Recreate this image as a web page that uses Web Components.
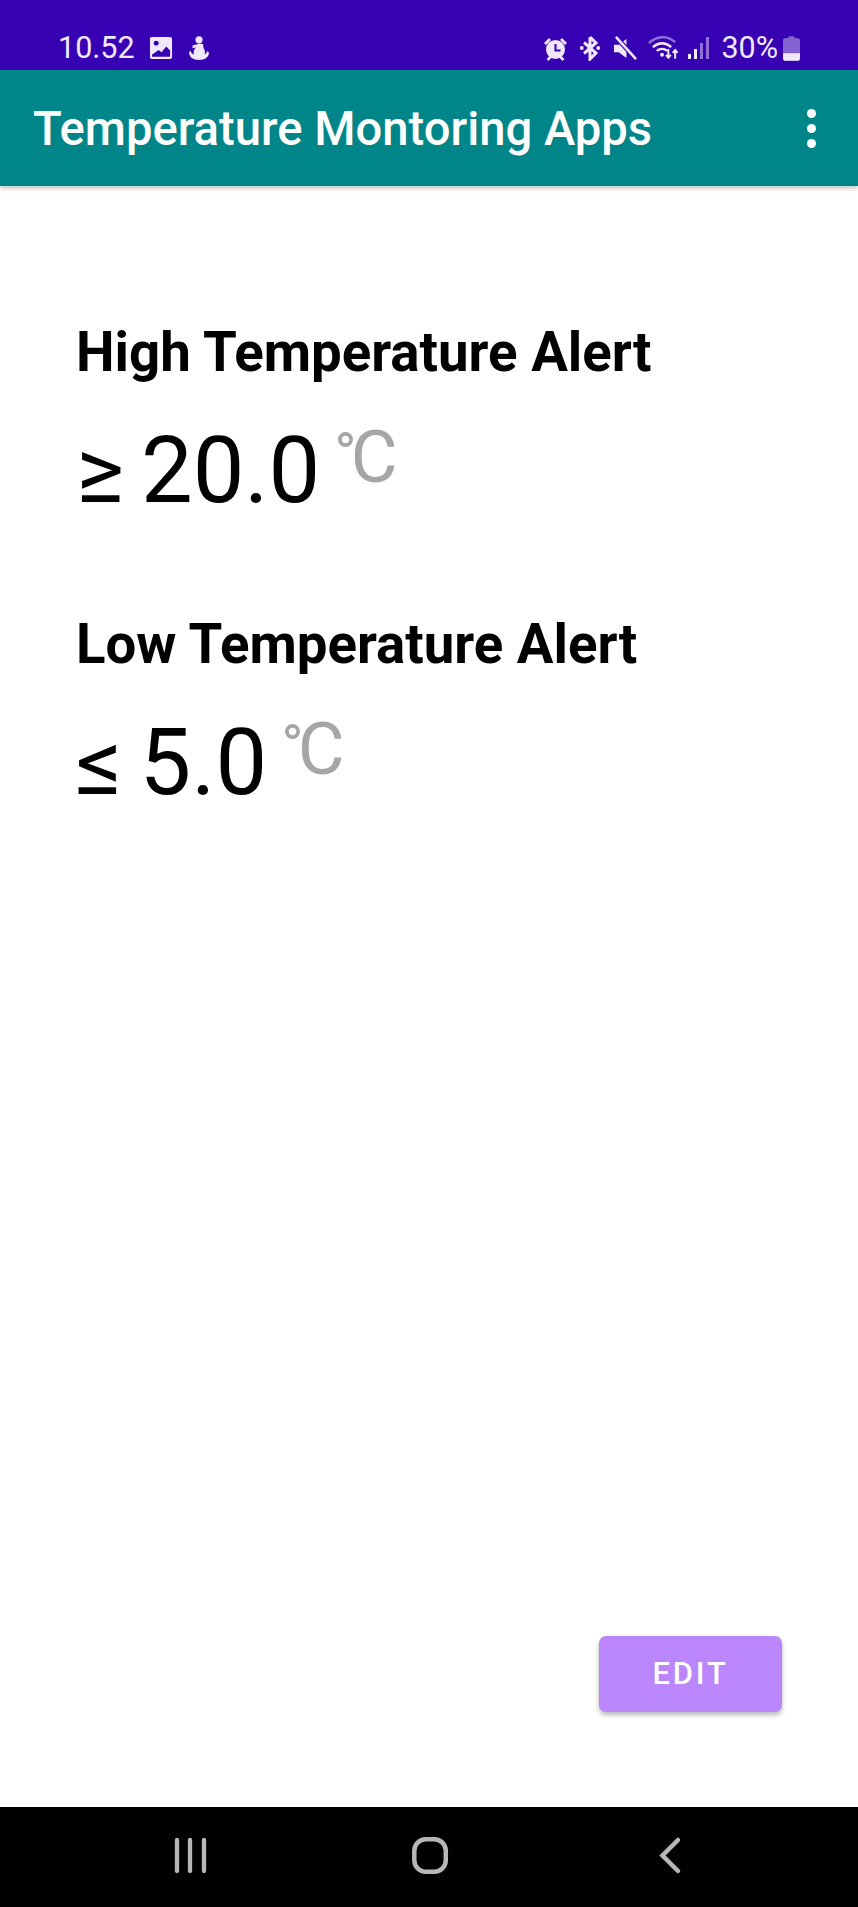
<!DOCTYPE html>
<html><head><meta charset="utf-8">
<style>html,body{margin:0;padding:0;background:#fff}body{font-family:Roboto,sans-serif}</style>
</head><body>
<app-screen>
  <status-bar></status-bar>
  <app-bar>Temperature Montoring Apps</app-bar>
  <main-content>
    <temp-alert title-text="High Temperature Alert" value="≥ 20.0"></temp-alert>
    <temp-alert title-text="Low Temperature Alert" value="≤ 5.0"></temp-alert>
  </main-content>
  <edit-button>EDIT</edit-button>
  <nav-bar></nav-bar>
</app-screen>
<script>
function def(name,html){customElements.define(name,class extends HTMLElement{connectedCallback(){if(this.shadowRoot)return;const r=this.attachShadow({mode:'open'});r.innerHTML=typeof html==='function'?html(this):html;}});}
def('app-screen',`<style>:host{display:flex;flex-direction:column;width:858px;height:1907px;overflow:hidden;background:#fff}</style><slot></slot>`);
def('status-bar',`<style>
:host{display:flex;box-sizing:border-box;height:70px;flex:none;background:#3700b3;color:#f1e9fb;font:400 30.500px/1 Roboto,sans-serif;padding:33px 0 0 58px;align-items:flex-start;justify-content:space-between}
.g{display:flex;align-items:center;height:30px}
svg{display:block;flex:none}
.r{margin-right:58px}
</style>
<div class="g"><span>10.52</span>
<svg style="margin-left:14px" width="24" height="24" viewBox="0 0 25 25"><path fill="#f1e9fb" fill-rule="evenodd" d="M3 1h19a2 2 0 0 1 2 2v19a2 2 0 0 1-2 2H3a2 2 0 0 1-2-2V3a2 2 0 0 1 2-2zM3 21.500h19V15l-4-4-5 6-3-2.500-7 5z"/><circle cx="7.500" cy="7.500" r="2.600" fill="#3700b3"/></svg>
<svg style="margin-left:15px" width="21" height="24" viewBox="0 0 21 24"><circle cx="11" cy="3.800" r="3.600" fill="#f1e9fb"/><path fill="#f1e9fb" d="M4.500 9.500L11 7.800 15 8l.5 4c1.500 2 2 4 1 6 1.500 0 2.500-1 2.500-3l2 1.500c0 4.500-4 7.500-10 7.500S1 21 1 16l2-1c0 2 1 3 3 3.500-1-2.500 0-5 2-7l-3.500.8z"/></svg>
</div>
<div class="g r">
<svg style="margin-left:-1px" width="25" height="25" viewBox="0 0 25 25"><circle cx="12.500" cy="13.500" r="9.500" fill="#f1e9fb"/><path d="M1 7l5-5 2 2-5 5zM24 7l-5-5-2 2 5 5z" fill="#f1e9fb"/><path d="M4.500 24l3-3M20.500 24l-3-3" stroke="#f1e9fb" stroke-width="2.500"/><path d="M12.500 8v6.500h5" stroke="#3700b3" stroke-width="2" fill="none"/></svg>
<svg style="margin-left:11px" width="22" height="26" viewBox="0 0 24 27"><path d="M12 1.500v24l6.500-6.500L5.500 7.500M12 1.500L18.500 8 5.500 19.500" fill="none" stroke="#f1e9fb" stroke-width="3.300"/><circle cx="3" cy="13.500" r="2.200" fill="#f1e9fb"/><circle cx="21" cy="13.500" r="2.200" fill="#f1e9fb"/></svg>
<svg style="margin-left:12px" width="24" height="24" viewBox="0 0 25 25"><path d="M1 8h5l8-6v20l-8-6H1z" fill="#f1e9fb" transform="translate(0 1)"/><path d="M3 1l21 23" stroke="#3700b3" stroke-width="5"/><path d="M3 1l21 23" stroke="#f1e9fb" stroke-width="2.600"/></svg>
<svg style="margin-left:11px" width="32" height="24" viewBox="0 0 33 24"><path d="M1 7C9-1 20-1 28 6" fill="none" stroke="#8f72d9" stroke-width="2.400"/><path d="M5 11c6-5 13-5 19 0" fill="none" stroke="#f1e9fb" stroke-width="2.400"/><path d="M9 15c4-3 7-3 11 0" fill="none" stroke="#f1e9fb" stroke-width="2.400"/><circle cx="14.500" cy="19" r="2" fill="#f1e9fb"/><path d="M21 13v9M18.500 19l2.500 3 2.500-3M28 23v-9M25.500 17l2.500-3 2.500 3" fill="none" stroke="#f1e9fb" stroke-width="2"/></svg>
<svg style="margin-left:8px" width="21" height="24" viewBox="0 0 21 24"><rect x="0" y="18" width="3" height="5" fill="#f1e9fb"/><rect x="6" y="13" width="3" height="10" fill="#f1e9fb"/><rect x="12" y="7" width="3" height="16" fill="#8f72d9"/><rect x="18" y="1" width="3" height="22" fill="#8f72d9"/></svg>
<span style="margin-left:12px">30%</span>
<svg style="margin-left:5px" width="17" height="25" viewBox="0 0 18 26"><path d="M6 0h6v2h3a3 3 0 0 1 3 3v18a3 3 0 0 1-3 3H3a3 3 0 0 1-3-3V5a3 3 0 0 1 3-3h3z" fill="#8263d0"/><path d="M0 18h18v5a3 3 0 0 1-3 3H3a3 3 0 0 1-3-3z" fill="#f1e9fb"/></svg>
</div>`);
def('app-bar',`<style>
:host{display:flex;box-sizing:border-box;height:116px;flex:none;align-items:center;justify-content:space-between;background:#008689;color:#fff;font:500 47.200px/1 Roboto,sans-serif;padding:3px 42px 0 33px;box-shadow:0 2px 5px rgba(0,0,0,.25);position:relative;z-index:1}
.m{display:flex;flex-direction:column;gap:6px;margin-top:-3px}
i{width:9px;height:9px;border-radius:50%;background:#fff;display:block}
</style><slot></slot><div class="m"><i></i><i></i><i></i></div>`);
def('main-content',`<style>:host{display:flex;flex-direction:column;flex:1;padding:143px 0 0 76px;gap:100px}</style><slot></slot>`);
def('temp-alert',el=>`<style>
:host{display:block;color:#000}
h2{margin:0;font:700 54.600px/46px Roboto,sans-serif}
.v{display:flex;align-items:flex-start;height:100px;margin-top:46px;font:400 92px/100px Roboto,sans-serif;white-space:pre;word-spacing:-6px}
.u{display:block;color:#a6a6a6;font-size:72px;line-height:68px;margin-left:14px}
.d{font-size:60px;letter-spacing:-6px;vertical-align:7px}
</style><h2>${el.getAttribute('title-text')}</h2><div class="v"><span>${el.getAttribute('value')}</span><span class="u"><span class="d">°</span>C</span></div>`);
def('edit-button',`<style>
:host{display:flex;flex:none;justify-content:flex-end;padding:0 76px 95px 0}
button{all:unset;box-sizing:border-box;width:183px;height:76px;border-radius:7px;background:#bb86fc;color:#fff;font:500 31px/76px Roboto,sans-serif;letter-spacing:2.800px;text-align:center;box-shadow:0 3px 5px rgba(0,0,0,.28)}
</style><button><slot></slot></button>`);
def('nav-bar',`<style>
:host{display:block;height:100px;flex:none;background:#000}
svg{display:block}
</style><svg width="858" height="100" viewBox="0 0 858 100"><g fill="none" stroke="#b7b7b7" stroke-linecap="round">
<path d="M177 33v31M190 33v31M204 33v31" stroke-width="4.300"/>
<rect x="414.300" y="32.300" width="31.500" height="32.500" rx="11.500" stroke-width="4.500"/>
<path d="M678 33l-15.500 15.500 15.500 15.500" stroke-width="4.500"/></g></svg>`);
</script>
</body></html>
